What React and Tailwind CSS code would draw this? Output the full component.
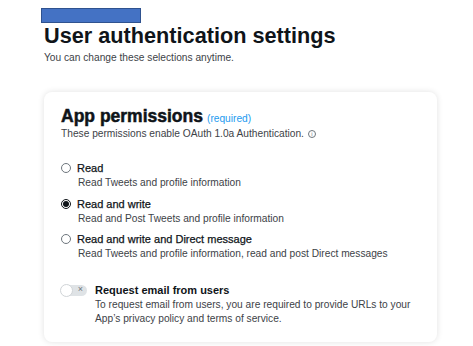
import React from 'react'

const font = { fontFamily: '"Liberation Sans", Arial, sans-serif' }

const Radio = ({ checked }) => (
  <span className={`mt-[1px] flex h-[10px] w-[10px] shrink-0 items-center justify-center rounded-full border ${checked ? 'border-[#0f1419]' : 'border-[#6e767d]'}`}>
    {checked && <span className='h-[6px] w-[6px] rounded-full bg-[#0f1419]'></span>}
  </span>
)

const Option = ({ label, desc, checked }) => (
  <div className='flex items-start gap-[6px]'>
    <Radio checked={checked} />
    <div className='flex flex-col'>
      <p className='text-[11px] leading-[13px] text-[#0f1419] [-webkit-text-stroke:0.25px_#0f1419]'>{label}</p>
      <p className='mt-[1px] pl-[1px] text-[10.2px] leading-[13px] whitespace-nowrap text-[#3d4247]'>{desc}</p>
    </div>
  </div>
)

const App = () => {
  return (
    <div className='h-[346px] w-[473px] overflow-hidden bg-white pl-[41px]' style={font}>
      {/* blank bar over the project name */}
      <div className='mt-[8px] h-[15px] w-[100px] border border-[#2f528f] bg-[#4472c4]'></div>

      <div className='pl-[3px]'>
        <h1 className='text-[21.7px] leading-[26px] font-bold text-[#0f1419]'>User authentication settings</h1>
        <p className='mt-[2px] text-[10.2px] leading-[14px] text-[#3d4247]'>You can change these selections anytime.</p>

        {/* ----card---- */}
        <div className='mt-[27px] h-[250px] w-[393px] rounded-[8px] bg-white px-[17px] pt-[15px] shadow-[0_0_6px_rgba(0,0,0,0.12)]'>
          <div className='flex items-baseline gap-[4px]'>
            <h2 className='text-[17.5px] leading-[18px] font-bold text-[#0f1419] [-webkit-text-stroke:0.5px_#0f1419]'>App permissions</h2>
            <span className='text-[10.2px] text-[#1d9bf0]'>(required)</span>
          </div>
          <p className='mt-[1px] flex items-center gap-[4px] text-[10.2px] leading-[14px] text-[#3d4247]'>
            These permissions enable OAuth 1.0a Authentication.
            <span className='flex h-[8px] w-[8px] items-center justify-center rounded-full border border-[#6e767d] text-[6px] leading-none text-[#6e767d]'>i</span>
          </p>

          <div className='mt-[21px] flex flex-col gap-[8.5px]'>
            <Option label='Read' desc='Read Tweets and profile information' />
            <Option label='Read and write' desc='Read and Post Tweets and profile information' checked />
            <Option label='Read and write and Direct message' desc='Read Tweets and profile information, read and post Direct messages' />
          </div>

          <div className='mt-[24px] flex items-start gap-[8px]'>
            <div className='relative mt-[1px] h-[11px] w-[26px] shrink-0 rounded-full bg-[#dfe3e6]'>
              <span className='absolute left-[-1px] top-[-1px] h-[13px] w-[13px] rounded-full border border-[#d0d4d7] bg-white'></span>
              <span className='absolute right-[4px] top-[-2px] text-[9px] text-[#6e767d]'>×</span>
            </div>
            <div className='flex flex-col'>
              <p className='text-[11px] leading-[13px] font-bold text-[#0f1419]'>Request email from users</p>
              <p className='mt-[1px] text-[10.2px] leading-[14px] whitespace-nowrap text-[#3d4247]'>
                To request email from users, you are required to provide URLs to your<br />
                App’s privacy policy and terms of service.
              </p>
            </div>
          </div>
        </div>
      </div>
    </div>
  )
}

export default App
